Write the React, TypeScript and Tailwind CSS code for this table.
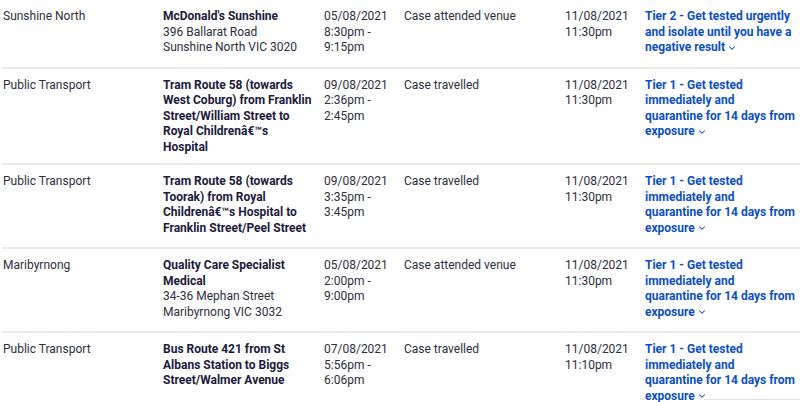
import { ChevronDown } from 'lucide-react';

type Exposure = {
  suburb: string;
  site: string[];
  address?: string[];
  date: string;
  time: string[];
  notes: string;
  added: string[];
  advice: string[];
};

const tier1 = ['Tier 1 - Get tested', 'immediately and', 'quarantine for 14 days from', 'exposure'];

const rows: Exposure[] = [
  {
    suburb: 'Sunshine North',
    site: ["McDonald's Sunshine"],
    address: ['396 Ballarat Road', 'Sunshine North VIC 3020'],
    date: '05/08/2021',
    time: ['8:30pm -', '9:15pm'],
    notes: 'Case attended venue',
    added: ['11/08/2021', '11:30pm'],
    advice: ['Tier 2 - Get tested urgently', 'and isolate until you have a', 'negative result'],
  },
  {
    suburb: 'Public Transport',
    site: ['Tram Route 58 (towards', 'West Coburg) from Franklin', 'Street/William Street to', 'Royal Childrenâ€™s', 'Hospital'],
    date: '09/08/2021',
    time: ['2:36pm -', '2:45pm'],
    notes: 'Case travelled',
    added: ['11/08/2021', '11:30pm'],
    advice: tier1,
  },
  {
    suburb: 'Public Transport',
    site: ['Tram Route 58 (towards', 'Toorak) from Royal', 'Childrenâ€™s Hospital to', 'Franklin Street/Peel Street'],
    date: '09/08/2021',
    time: ['3:35pm -', '3:45pm'],
    notes: 'Case travelled',
    added: ['11/08/2021', '11:30pm'],
    advice: tier1,
  },
  {
    suburb: 'Maribyrnong',
    site: ['Quality Care Specialist', 'Medical'],
    address: ['34-36 Mephan Street', 'Maribyrnong VIC 3032'],
    date: '05/08/2021',
    time: ['2:00pm -', '9:00pm'],
    notes: 'Case attended venue',
    added: ['11/08/2021', '11:30pm'],
    advice: tier1,
  },
  {
    suburb: 'Public Transport',
    site: ['Bus Route 421 from St', 'Albans Station to Biggs', 'Street/Walmer Avenue'],
    date: '07/08/2021',
    time: ['5:56pm -', '6:06pm'],
    notes: 'Case travelled',
    added: ['11/08/2021', '11:10pm'],
    advice: tier1,
  },
];

export default function App() {
  return (
    <div className="relative w-[800px] h-[402px] overflow-hidden bg-white pl-[2px] font-['Roboto',sans-serif] text-[12px] leading-[15.5px] text-[#2e2e3c]">
      {rows.map((row, i) => (
        <div
          key={i}
          className="grid grid-cols-[160px_161px_80px_161px_80px_1fr] border-b-2 border-[#ececec] pt-[9px] pb-[8px] pl-px whitespace-nowrap"
        >
          <div>{row.suburb}</div>
          <div>
            {row.site.map((line) => (
              <div key={line} className="font-bold text-[#1c1a3b]">{line}</div>
            ))}
            {row.address?.map((line) => (
              <div key={line}>{line}</div>
            ))}
          </div>
          <div>
            <div>{row.date}</div>
            {row.time.map((t) => (
              <div key={t}>{t}</div>
            ))}
          </div>
          <div>{row.notes}</div>
          <div>
            {row.added.map((a) => (
              <div key={a}>{a}</div>
            ))}
          </div>
          <div className="pb-[3px] font-bold text-[#0b4fc2]">
            {row.advice.map((line, j) => (
              <div key={line}>
                {line}
                {j === row.advice.length - 1 && (
                  <ChevronDown className="ml-0.5 inline h-[10px] w-[10px] align-middle" strokeWidth={2.5} />
                )}
              </div>
            ))}
          </div>
        </div>
      ))}
      <div className="absolute left-[704px] top-[399px] h-[4px] w-[96px] border-t border-[#e2e2e2] bg-white" />
    </div>
  );
}
